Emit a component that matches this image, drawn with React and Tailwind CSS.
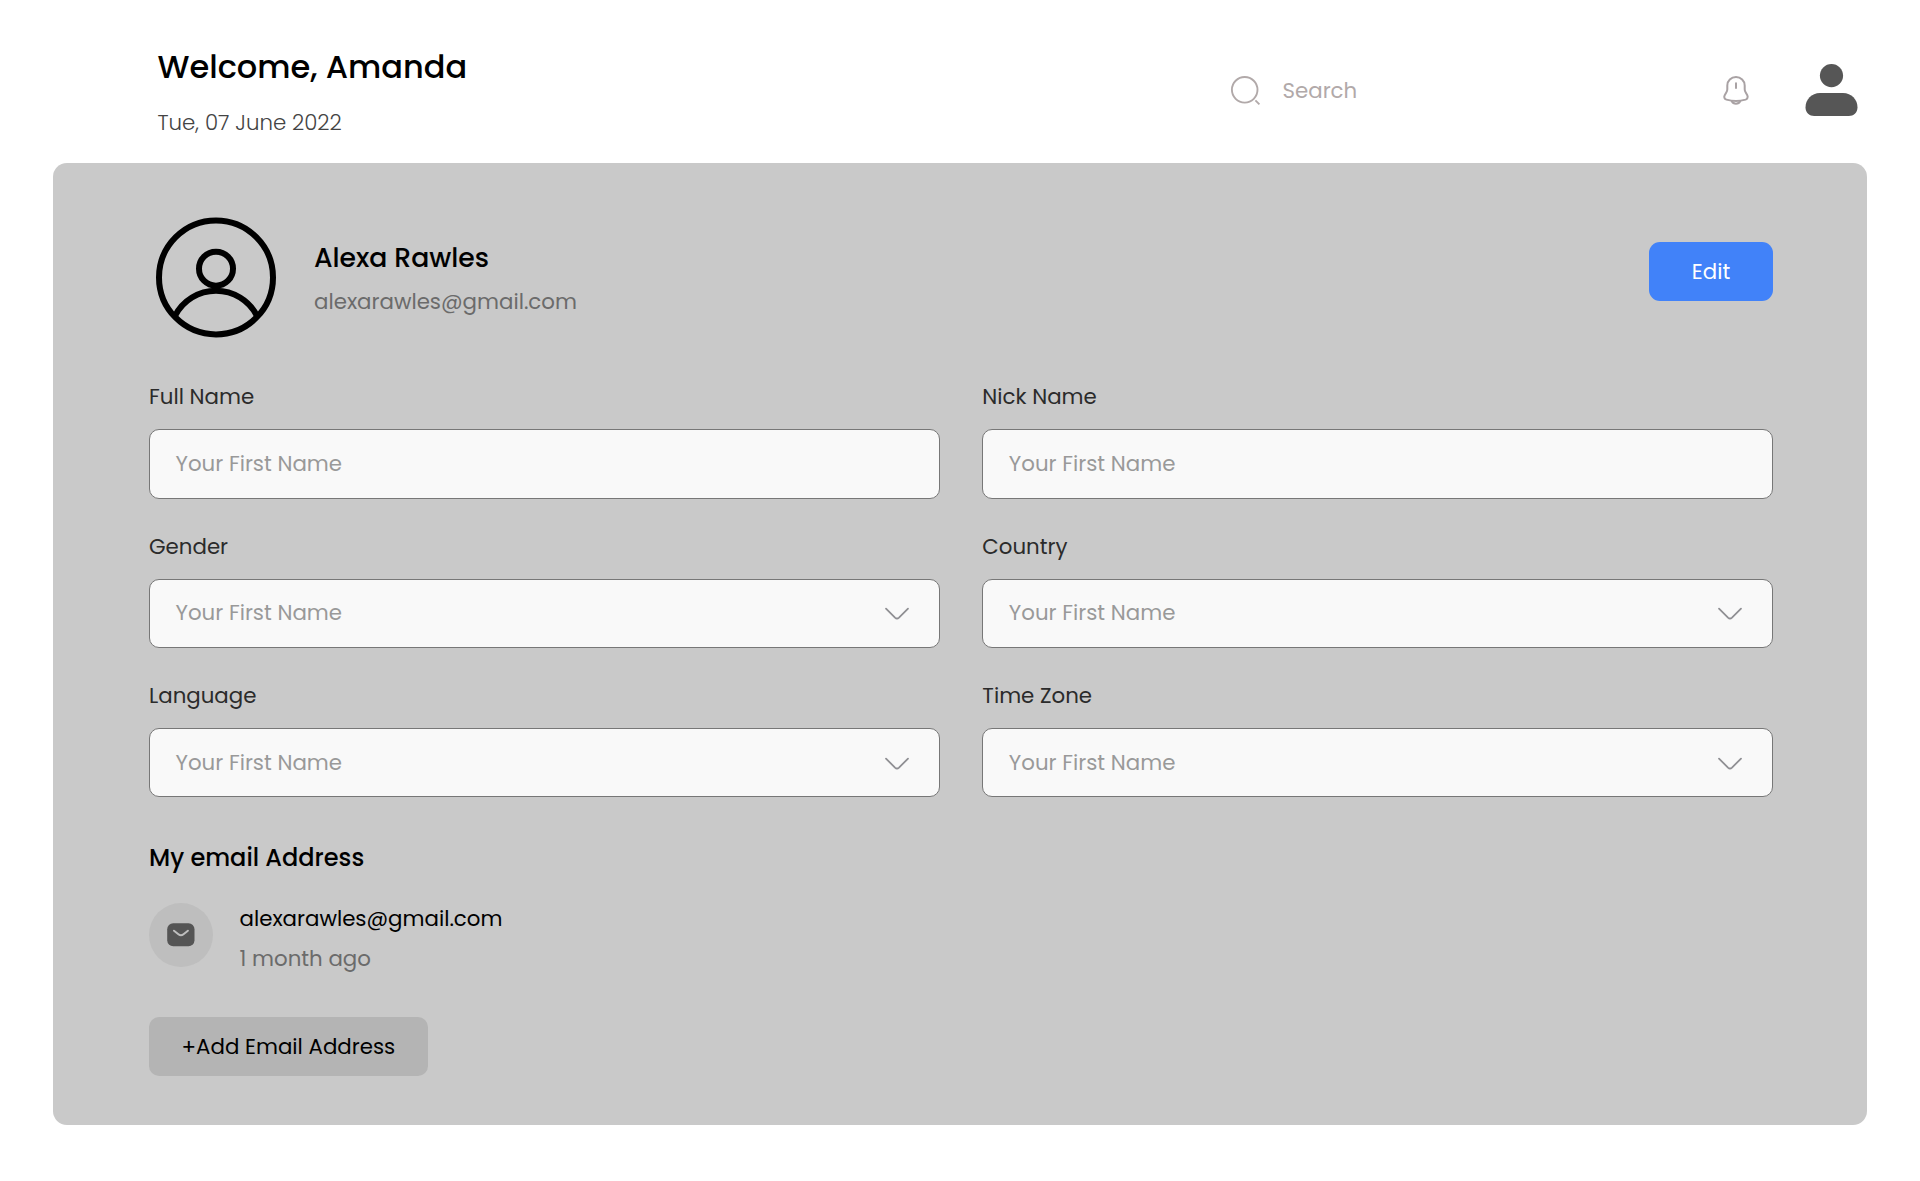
function SearchIcon() {
  return (
    <svg width="32" height="32" viewBox="0 0 32 32" fill="none" stroke="#b1a9a9" strokeWidth="1.9" className="shrink-0">
      <circle cx="15.7" cy="15.8" r="12.8" />
      <path d="M26.4 26.4l4 4" />
    </svg>
  );
}

function BellIcon() {
  return (
    <svg width="32" height="32" viewBox="0 0 32 32" fill="none" stroke="#a9a2a4" strokeWidth="2" strokeLinecap="round" className="shrink-0">
      <path d="M16 3c-4.9 0-8.7 3.8-8.7 8.4v3.9c0 .9-.4 2.2-.9 3l-1.7 2.9c-1 1.8-.3 3.8 1.7 4.4 6.2 1.800 13 1.800 19.200 0 1.800-.6 2.600-2.700 1.700-4.400l-1.700-2.900c-.5-.8-.9-2.100-.9-3v-3.900C24.700 6.800 20.800 3 16 3z" />
      <path d="M11.7 27c.8 1.700 2.400 2.700 4.300 2.700s3.500-1 4.300-2.700" />
      <path d="M16 9.300v4.600" />
    </svg>
  );
}

function UserIcon() {
  return (
    <svg width="53" height="52" viewBox="-0.5 0 53 52" fill="#565656" className="shrink-0">
      <circle cx="26" cy="11.6" r="11.6" />
      <path d="M14.5 29h23C46 29 52 35.5 52 43.5c0 5-4 8.5-8.7 8.5H8.7C4 52 0 48.5 0 43.5 0 35.5 6 29 14.5 29z" />
    </svg>
  );
}

function AvatarIcon() {
  return (
    <svg width="120" height="121" viewBox="0 -0.4 120 121" fill="none" stroke="#000" strokeWidth="6" className="shrink-0">
      <circle cx="60" cy="60" r="57" />
      <circle cx="60" cy="51.3" r="17" />
      <path d="M19 98.5a46 46 0 0 1 82 0" />
    </svg>
  );
}

function ChevronIcon() {
  return (
    <svg width="26" height="14" viewBox="0 0 26 14" fill="none" stroke="#8f8f93" strokeWidth="1.8" strokeLinecap="round" className="mr-[29px] mt-[2.5px] shrink-0">
      <path d="M2 1.6l9 9c1.3 1.2 2.7 1.2 4 0l9-9" />
    </svg>
  );
}

function MailIcon() {
  return (
    <svg width="28" height="24" viewBox="0 0 28 24" className="shrink-0">
      <rect x="0.2" y="0.3" width="27.3" height="23" rx="6" fill="#555" />
      <path d="M7 7.700l4.400 3.500c1.500 1.200 3.600 1.200 5.100 0l4.400-3.500" fill="none" stroke="#bebebe" strokeWidth="2" strokeLinecap="round" />
    </svg>
  );
}

const fields = [
  { label: "Full Name" },
  { label: "Nick Name" },
  { label: "Gender", select: true },
  { label: "Country", select: true },
  { label: "Language", select: true },
  { label: "Time Zone", select: true },
];

function Field({ label, select }) {
  return (
    <div className="flex flex-col">
      <label className="text-[21.33px] leading-8 text-[#2b2b2b]">{label}</label>
      <div className="mt-[15.9px] flex h-[69.3px] items-center justify-between rounded-[10px] border border-[#777] bg-[#f9f9f9] pl-[25.5px]">
        <span className="mt-[0.5px] text-[21.33px] leading-8 text-[#999]">Your First Name</span>
        {select && <ChevronIcon />}
      </div>
    </div>
  );
}

export default function App() {
  return (
    <div className="h-[1181px] w-[1920px] bg-white font-['Poppins','Inter',sans-serif] text-black [font-feature-settings:'cv11']">
      <header className="flex h-[163px] items-start">
        <div className="w-[1072px] pl-[157.5px] pt-[47px]">
          <h1 className="text-[32px] font-medium leading-10">Welcome, Amanda</h1>
          <p className="mt-5 text-[21.33px] font-light leading-8 text-[#444]">Tue, 07 June 2022</p>
        </div>
        <div className="ml-[156.5px] mt-[74px] flex h-8 w-[491px] items-center">
          <SearchIcon />
          <span className="ml-[22px] mt-px text-[21.33px] leading-8 text-[#b1a9a9]">Search</span>
        </div>
        <div className="mt-[74px]">
          <BellIcon />
        </div>
        <div className="ml-[53.5px] mt-[64px]">
          <UserIcon />
        </div>
      </header>

      <main className="mx-[53px] h-[962px] w-[1814px] rounded-[14px] bg-[#c9c9c9] pl-24 pr-[94px] pt-[54.3px]">
        <section className="flex h-[120px] items-start pl-[7px]">
          <AvatarIcon />
          <div className="ml-[38px] mt-[22.3px] grow">
            <h2 className="text-[26.67px] font-medium leading-9">Alexa Rawles</h2>
            <p className="mt-[10px] text-[21.33px] leading-8 text-[#6b6b6b]">alexarawles@gmail.com</p>
          </div>
          <button className="mt-[25px] h-[59px] w-[124px] rounded-[11px] bg-[#4182f9] text-[21.33px] leading-8 text-white">Edit</button>
        </section>

        <section className="mt-[44.1px] grid grid-cols-2 gap-x-[42.7px] gap-y-[32.1px]">
          {fields.map((f) => (
            <Field key={f.label} {...f} />
          ))}
        </section>

        <h3 className="mt-[43px] text-[24px] font-medium leading-9">My email Address</h3>
        <section className="mt-[26.5px] flex h-16">
          <div className="flex size-16 items-center justify-center rounded-full bg-[#bebebe]">
            <MailIcon />
          </div>
          <div className="ml-[26.5px]">
            <p className="text-[21.33px] leading-8">alexarawles@gmail.com</p>
            <p className="mt-2 text-[21.33px] leading-8 text-[#6b6b6b]">1 month ago</p>
          </div>
        </section>
        <button className="mt-[50.5px] h-[59px] w-[278.7px] rounded-[10px] bg-[#b4b4b4] text-[21.33px] leading-8">+Add Email Address</button>
      </main>
    </div>
  );
}
